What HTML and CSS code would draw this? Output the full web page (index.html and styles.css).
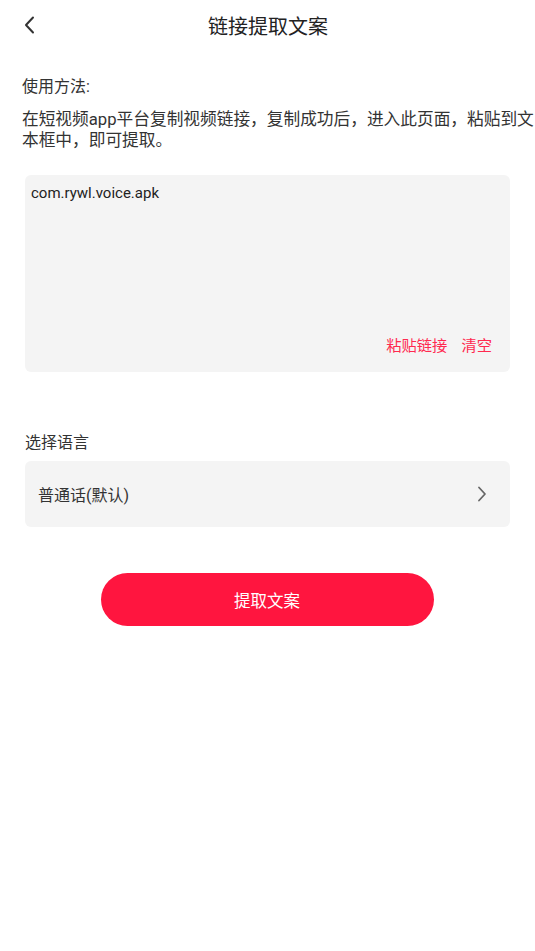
FILE: index.html
```html
<!DOCTYPE html>
<html lang="zh-CN">
<head>
<meta charset="utf-8">
<title>链接提取文案</title>
<link rel="stylesheet" href="styles.css">
</head>
<body>
<div class="page">
  <header class="topbar">
    <span class="back">
      <svg width="14" height="18" viewBox="0 0 14 18"><path d="M10 1.5 L3 9 L10 16.5" fill="none" stroke="#333" stroke-width="2" stroke-linecap="round" stroke-linejoin="round"/></svg>
    </span>
    <h1 class="title">链接提取文案</h1>
  </header>

  <section class="usage">
    <p class="usage-label">使用方法:</p>
    <p class="usage-text">在短视频app平台复制视频链接，复制成功后，进入此页面，粘贴到文本框中，即可提取。</p>
  </section>

  <div class="textbox">
    <div class="link-text">com.rywl.voice.apk</div>
    <div class="actions">
      <span class="action">粘贴链接</span>
      <span class="action">清空</span>
    </div>
  </div>

  <div class="lang-label">选择语言</div>
  <div class="lang-box">
    <span>普通话(默认)</span>
    <svg width="10" height="16" viewBox="0 0 10 16"><path d="M2 1.5 L8 8 L2 14.5" fill="none" stroke="#666" stroke-width="1.8" stroke-linecap="round" stroke-linejoin="round"/></svg>
  </div>

  <div class="btn-wrap">
    <button class="submit">提取文案</button>
  </div>
</div>
</body>
</html>
```

FILE: styles.css
```css
* { box-sizing: border-box; }
html, body { margin: 0; padding: 0; background: #fff; }
body {
  font-family: Roboto, "Noto Sans CJK SC", "Noto Sans", sans-serif;
  color: #333;
  width: 535px;
  height: 951px;
}
.page { display: flex; flex-direction: column; }
.topbar {
  height: 50px;
  display: flex;
  align-items: center;
  justify-content: center;
  position: relative;
}
.back {
  position: absolute;
  left: 23px;
  top: 16px;
  display: flex;
}
.title {
  margin: 0;
  font-size: 20px;
  font-weight: 400;
  color: #222;
  margin-left: 1px;
}
.usage { padding: 0 0 0 22px; margin-top: 25px; }
.usage-label {
  margin: 0;
  font-size: 16px;
  line-height: 24px;
  color: #333;
}
.usage-text {
  margin: 10px 0 0;
  font-size: 16.7px;
  line-height: 21px;
  color: #333;
}
.textbox {
  margin: 24px 25px 0 25px;
  height: 197px;
  background: #f4f4f4;
  border-radius: 6px;
  display: flex;
  flex-direction: column;
  justify-content: space-between;
  padding: 8px 18px 16px 6px;
}
.link-text { font-size: 15px; color: #222; line-height: 20px; }
.actions { display: flex; justify-content: flex-end; gap: 14px; }
.action { font-size: 15.3px; color: #ff2a50; line-height: 20px; }
.lang-label {
  margin: 60px 0 0 25px;
  font-size: 16px;
  line-height: 22px;
  color: #333;
}
.lang-box {
  margin: 7px 25px 0 25px;
  height: 66px;
  background: #f4f4f4;
  border-radius: 6px;
  display: flex;
  align-items: center;
  justify-content: space-between;
  padding: 0 23px 0 13px;
  font-size: 16px;
  color: #333;
}
.btn-wrap { display: flex; justify-content: center; margin-top: 46px; }
.submit {
  width: 333px;
  height: 53px;
  border: none;
  border-radius: 27px;
  background: #ff153f;
  color: #fff;
  font-family: inherit;
  font-size: 16.5px;
  margin-right: 1px;
}
```
